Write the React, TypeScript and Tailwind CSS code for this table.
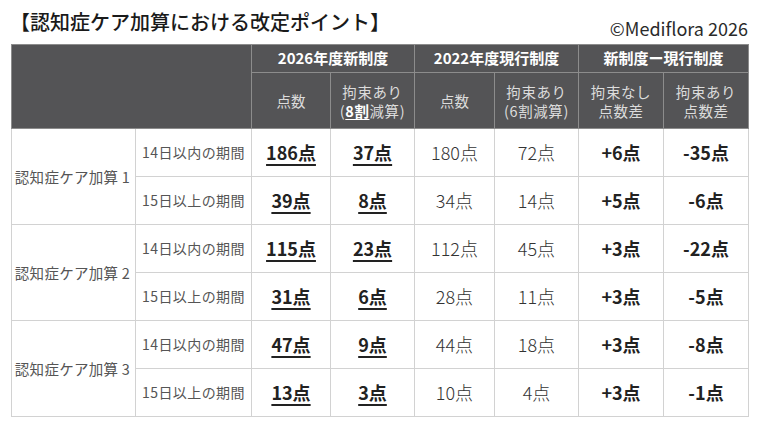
const font = { fontFamily: '"Noto Sans CJK JP", "Noto Sans", sans-serif' };

type Row = {
  label?: string;
  period: string;
  newBase: string;
  newBound: string;
  oldBase: string;
  oldBound: string;
  diffFree: string;
  diffBound: string;
};

const rows: Row[] = [
  { label: '認知症ケア加算 1', period: '14日以内の期間', newBase: '186点', newBound: '37点', oldBase: '180点', oldBound: '72点', diffFree: '+6点', diffBound: '-35点' },
  { period: '15日以上の期間', newBase: '39点', newBound: '8点', oldBase: '34点', oldBound: '14点', diffFree: '+5点', diffBound: '-6点' },
  { label: '認知症ケア加算 2', period: '14日以内の期間', newBase: '115点', newBound: '23点', oldBase: '112点', oldBound: '45点', diffFree: '+3点', diffBound: '-22点' },
  { period: '15日以上の期間', newBase: '31点', newBound: '6点', oldBase: '28点', oldBound: '11点', diffFree: '+3点', diffBound: '-5点' },
  { label: '認知症ケア加算 3', period: '14日以内の期間', newBase: '47点', newBound: '9点', oldBase: '44点', oldBound: '18点', diffFree: '+3点', diffBound: '-8点' },
  { period: '15日以上の期間', newBase: '13点', newBound: '3点', oldBase: '10点', oldBound: '4点', diffFree: '+3点', diffBound: '-1点' },
];

const head = 'border border-[#8c8c8c] bg-[#545456] p-0 text-center align-middle';
const body = 'border border-[#d2d2d2] p-0 text-center align-middle';

const App = () => {
  return (
    <div className="h-[425px] w-[760px] bg-white px-[11px]" style={font}>
      <div className="flex h-[44px] items-start justify-between">
        <h1 className="mt-[7px] ml-[-1px] text-[20px] leading-[30px] font-medium text-[#1a1a1a]">
          【認知症ケア加算における改定ポイント】
        </h1>
        <p className="mt-[16px] mr-[1px] text-[18px] leading-[24px] text-[#2a2a2a]">©Mediflora 2026</p>
      </div>

      <table className="w-[737px] table-fixed border-collapse">
        <colgroup>
          <col className="w-[124px]" />
          <col className="w-[116px]" />
          <col className="w-[79px]" />
          <col className="w-[84px]" />
          <col className="w-[80px]" />
          <col className="w-[84px]" />
          <col className="w-[85px]" />
          <col className="w-[85px]" />
        </colgroup>
        <thead>
          <tr className="h-[28px] text-[15px] font-bold text-white">
            <th colSpan={2} rowSpan={2} className={head}></th>
            <th colSpan={2} className={head}>2026年度新制度</th>
            <th colSpan={2} className={head}>2022年度現行制度</th>
            <th colSpan={2} className={head}>新制度ー現行制度</th>
          </tr>
          <tr className="h-[56px] text-[14.5px] leading-[19px] font-normal text-[#dcdcdc]">
            <th className={head + ' font-normal'}>点数</th>
            <th className={head + ' font-normal tracking-[0.04em]'}>
              拘束あり
              <br />
              (<span className="font-bold text-white underline underline-offset-2">8割</span>減算)
            </th>
            <th className={head + ' font-normal'}>点数</th>
            <th className={head + ' font-normal tracking-[0.04em]'}>
              拘束あり
              <br />
              (6割減算)
            </th>
            <th className={head + ' font-normal tracking-[0.04em]'}>
              拘束なし
              <br />
              点数差
            </th>
            <th className={head + ' font-normal tracking-[0.04em]'}>
              拘束あり
              <br />
              点数差
            </th>
          </tr>
        </thead>
        <tbody>
          {rows.map((r) => (
            <tr key={(r.label ?? '') + r.period + r.newBase} className="h-[48px]">
              {r.label && (
                <td rowSpan={2} className={body + ' pr-[2px] text-[14.5px] tracking-[0.02em] text-[#555]'}>
                  {r.label}
                </td>
              )}
              <td className={body + ' text-[14px] tracking-[0.03em] text-[#555]'}>{r.period}</td>
              <td className={body + ' text-[18px] font-bold text-[#222]'}>
                <span className="underline decoration-[1.5px] underline-offset-[4px]">{r.newBase}</span>
              </td>
              <td className={body + ' text-[18px] font-bold text-[#222]'}>
                <span className="underline decoration-[1.5px] underline-offset-[4px]">{r.newBound}</span>
              </td>
              <td className={body + ' text-[18px] font-light text-[#333]'}>{r.oldBase}</td>
              <td className={body + ' text-[18px] font-light text-[#333]'}>{r.oldBound}</td>
              <td className={body + ' text-[18px] font-bold text-[#222]'}>{r.diffFree}</td>
              <td className={body + ' text-[18px] font-bold text-[#222]'}>{r.diffBound}</td>
            </tr>
          ))}
        </tbody>
      </table>
    </div>
  );
};

export default App;
